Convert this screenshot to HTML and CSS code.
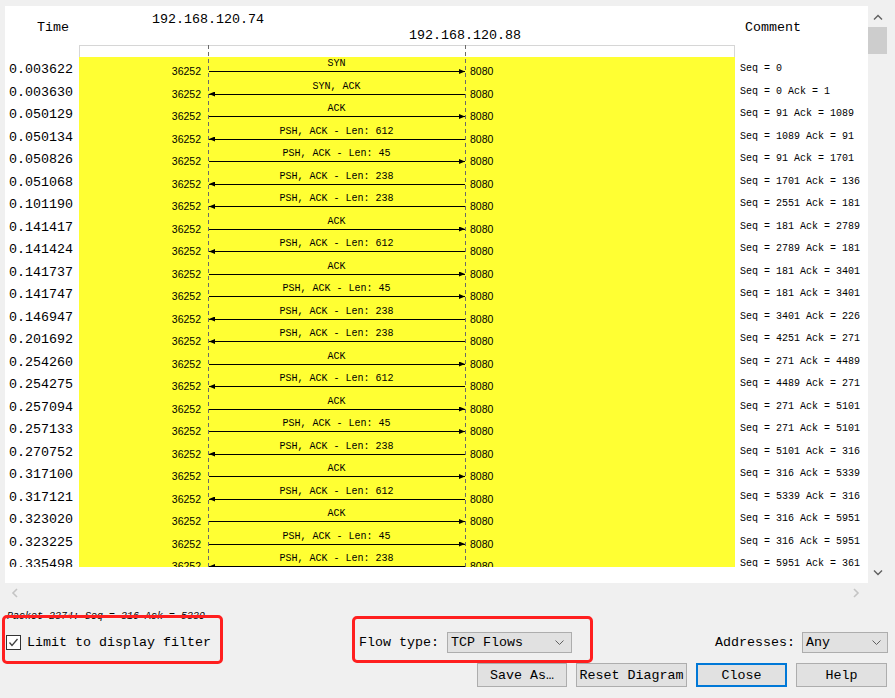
FILE: index.html
```html
<!DOCTYPE html>
<html>
<head>
<meta charset="utf-8">
<link rel="stylesheet" href="styles.css">
</head>
<body>
<div class="view">
  <div class="panel">
    <div class="clip">
      <div class="diagram">
        <div class="dash dash-a"></div>
        <div class="dash dash-b"></div>
        <div class="row head">
          <div class="time">Time</div>
          <div class="graph">
            <div class="ip ip-a">192.168.120.74</div>
            <div class="ip ip-b">192.168.120.88</div>
            <div class="frame"></div>
          </div>
          <div class="comment">Comment</div>
        </div>
        <div class="row"><div class="time">0.003622</div><div class="graph"><div class="pl">36252</div><div class="ar"><div class="lbl">SYN</div><div class="line r"></div></div><div class="pr">8080</div></div><div class="comment">Seq = 0</div></div>
        <div class="row"><div class="time">0.003630</div><div class="graph"><div class="pl">36252</div><div class="ar"><div class="lbl">SYN, ACK</div><div class="line l"></div></div><div class="pr">8080</div></div><div class="comment">Seq = 0 Ack = 1</div></div>
        <div class="row"><div class="time">0.050129</div><div class="graph"><div class="pl">36252</div><div class="ar"><div class="lbl">ACK</div><div class="line r"></div></div><div class="pr">8080</div></div><div class="comment">Seq = 91 Ack = 1089</div></div>
        <div class="row"><div class="time">0.050134</div><div class="graph"><div class="pl">36252</div><div class="ar"><div class="lbl">PSH, ACK - Len: 612</div><div class="line l"></div></div><div class="pr">8080</div></div><div class="comment">Seq = 1089 Ack = 91</div></div>
        <div class="row"><div class="time">0.050826</div><div class="graph"><div class="pl">36252</div><div class="ar"><div class="lbl">PSH, ACK - Len: 45</div><div class="line r"></div></div><div class="pr">8080</div></div><div class="comment">Seq = 91 Ack = 1701</div></div>
        <div class="row"><div class="time">0.051068</div><div class="graph"><div class="pl">36252</div><div class="ar"><div class="lbl">PSH, ACK - Len: 238</div><div class="line l"></div></div><div class="pr">8080</div></div><div class="comment">Seq = 1701 Ack = 136</div></div>
        <div class="row"><div class="time">0.101190</div><div class="graph"><div class="pl">36252</div><div class="ar"><div class="lbl">PSH, ACK - Len: 238</div><div class="line l"></div></div><div class="pr">8080</div></div><div class="comment">Seq = 2551 Ack = 181</div></div>
        <div class="row"><div class="time">0.141417</div><div class="graph"><div class="pl">36252</div><div class="ar"><div class="lbl">ACK</div><div class="line r"></div></div><div class="pr">8080</div></div><div class="comment">Seq = 181 Ack = 2789</div></div>
        <div class="row"><div class="time">0.141424</div><div class="graph"><div class="pl">36252</div><div class="ar"><div class="lbl">PSH, ACK - Len: 612</div><div class="line l"></div></div><div class="pr">8080</div></div><div class="comment">Seq = 2789 Ack = 181</div></div>
        <div class="row"><div class="time">0.141737</div><div class="graph"><div class="pl">36252</div><div class="ar"><div class="lbl">ACK</div><div class="line r"></div></div><div class="pr">8080</div></div><div class="comment">Seq = 181 Ack = 3401</div></div>
        <div class="row"><div class="time">0.141747</div><div class="graph"><div class="pl">36252</div><div class="ar"><div class="lbl">PSH, ACK - Len: 45</div><div class="line r"></div></div><div class="pr">8080</div></div><div class="comment">Seq = 181 Ack = 3401</div></div>
        <div class="row"><div class="time">0.146947</div><div class="graph"><div class="pl">36252</div><div class="ar"><div class="lbl">PSH, ACK - Len: 238</div><div class="line l"></div></div><div class="pr">8080</div></div><div class="comment">Seq = 3401 Ack = 226</div></div>
        <div class="row"><div class="time">0.201692</div><div class="graph"><div class="pl">36252</div><div class="ar"><div class="lbl">PSH, ACK - Len: 238</div><div class="line l"></div></div><div class="pr">8080</div></div><div class="comment">Seq = 4251 Ack = 271</div></div>
        <div class="row"><div class="time">0.254260</div><div class="graph"><div class="pl">36252</div><div class="ar"><div class="lbl">ACK</div><div class="line r"></div></div><div class="pr">8080</div></div><div class="comment">Seq = 271 Ack = 4489</div></div>
        <div class="row"><div class="time">0.254275</div><div class="graph"><div class="pl">36252</div><div class="ar"><div class="lbl">PSH, ACK - Len: 612</div><div class="line l"></div></div><div class="pr">8080</div></div><div class="comment">Seq = 4489 Ack = 271</div></div>
        <div class="row"><div class="time">0.257094</div><div class="graph"><div class="pl">36252</div><div class="ar"><div class="lbl">ACK</div><div class="line r"></div></div><div class="pr">8080</div></div><div class="comment">Seq = 271 Ack = 5101</div></div>
        <div class="row"><div class="time">0.257133</div><div class="graph"><div class="pl">36252</div><div class="ar"><div class="lbl">PSH, ACK - Len: 45</div><div class="line r"></div></div><div class="pr">8080</div></div><div class="comment">Seq = 271 Ack = 5101</div></div>
        <div class="row"><div class="time">0.270752</div><div class="graph"><div class="pl">36252</div><div class="ar"><div class="lbl">PSH, ACK - Len: 238</div><div class="line l"></div></div><div class="pr">8080</div></div><div class="comment">Seq = 5101 Ack = 316</div></div>
        <div class="row"><div class="time">0.317100</div><div class="graph"><div class="pl">36252</div><div class="ar"><div class="lbl">ACK</div><div class="line r"></div></div><div class="pr">8080</div></div><div class="comment">Seq = 316 Ack = 5339</div></div>
        <div class="row"><div class="time">0.317121</div><div class="graph"><div class="pl">36252</div><div class="ar"><div class="lbl">PSH, ACK - Len: 612</div><div class="line l"></div></div><div class="pr">8080</div></div><div class="comment">Seq = 5339 Ack = 316</div></div>
        <div class="row"><div class="time">0.323020</div><div class="graph"><div class="pl">36252</div><div class="ar"><div class="lbl">ACK</div><div class="line r"></div></div><div class="pr">8080</div></div><div class="comment">Seq = 316 Ack = 5951</div></div>
        <div class="row"><div class="time">0.323225</div><div class="graph"><div class="pl">36252</div><div class="ar"><div class="lbl">PSH, ACK - Len: 45</div><div class="line r"></div></div><div class="pr">8080</div></div><div class="comment">Seq = 316 Ack = 5951</div></div>
        <div class="row"><div class="time">0.335498</div><div class="graph"><div class="pl">36252</div><div class="ar"><div class="lbl">PSH, ACK - Len: 238</div><div class="line l"></div></div><div class="pr">8080</div></div><div class="comment">Seq = 5951 Ack = 361</div></div>
      </div>
    </div>
  </div>
  <div class="vscroll">
    <div class="vbtn"><svg width="10" height="6" viewBox="0 0 10 6"><polyline points="1,5.5 5,1.5 9,5.5" fill="none" stroke="#606060" stroke-width="1.4"/></svg></div>
    <div class="thumb"></div>
    <div class="vfill"></div>
    <div class="vbtn"><svg width="10" height="6" viewBox="0 0 10 6"><polyline points="1,0.5 5,4.5 9,0.5" fill="none" stroke="#606060" stroke-width="1.4"/></svg></div>
  </div>
</div>
<div class="hscroll">
  <svg width="7" height="10" viewBox="0 0 7 10"><polyline points="6,1 2,5 6,9" fill="none" stroke="#c4c4c4" stroke-width="1.6"/></svg>
  <svg width="7" height="10" viewBox="0 0 7 10"><polyline points="1,1 5,5 1,9" fill="none" stroke="#c4c4c4" stroke-width="1.6"/></svg>
</div>
<div class="status">Packet 2374: Seq = 316 Ack = 5339</div>
<div class="controls">
  <div class="check">
    <span class="box"><svg width="13" height="13" viewBox="0 0 13 13"><polyline points="2.5,6.5 5,9.5 10.5,3" fill="none" stroke="#404040" stroke-width="1.3"/></svg></span>
    <span class="check-label">Limit to display filter</span>
  </div>
  <div class="group flow">
    <span>Flow type:</span>
    <div class="combo flow-combo"><span>TCP Flows</span><svg width="9" height="5" viewBox="0 0 9 5"><polyline points="0.5,0.5 4.5,4.5 8.5,0.5" fill="none" stroke="#606060" stroke-width="1"/></svg></div>
  </div>
  <div class="group addr">
    <span>Addresses:</span>
    <div class="combo addr-combo"><span>Any</span><svg width="9" height="5" viewBox="0 0 9 5"><polyline points="0.5,0.5 4.5,4.5 8.5,0.5" fill="none" stroke="#606060" stroke-width="1"/></svg></div>
  </div>
</div>
<div class="buttons">
  <div class="btn b-save">Save As…</div>
  <div class="btn b-reset">Reset Diagram</div>
  <div class="btn b-close">Close</div>
  <div class="btn b-help">Help</div>
</div>
<div class="mark m1"></div>
<div class="mark m2"></div>
</body>
</html>
```

FILE: styles.css
```css
* { box-sizing: border-box; }
html, body { margin: 0; padding: 0; }
body {
  position: relative;
  width: 895px;
  height: 698px;
  overflow: hidden;
  background: #f0f0f0;
  font-family: "Liberation Mono", "DejaVu Sans Mono", monospace;
  font-size: 13.33px;
  color: #000;
}
.view { display: flex; padding: 6px 0 0 5px; }
.panel { width: 863px; height: 577px; background: #fff; }
.clip { height: 561px; overflow: hidden; }
.diagram { position: relative; }
.dash {
  position: absolute;
  top: 39px;
  bottom: 0;
  width: 1px;
  background: repeating-linear-gradient(to bottom, #6a6a6a 0 4px, transparent 4px 7px);
}
.dash-a { left: 203px; }
.dash-b { left: 460px; }

.row {
  display: grid;
  grid-template-columns: 74px 656px 133px;
  height: 22.5px;
}
.row.head { height: 51px; }
.time {
  text-align: right;
  padding-right: 6px;
  padding-top: 5px;
  line-height: 16px;
  white-space: nowrap;
}
.head .time { text-align: left; padding-left: 32px; padding-top: 14px; }
.graph {
  background: #ffff33;
  display: grid;
  grid-template-columns: 129px 257px 1fr;
}
.head .graph { background: #fff; display: block; }
.ip { width: 258px; height: 16px; line-height: 16px; text-align: center; white-space: nowrap; }
.ip-a { margin-top: 6px; }
.ip-b { margin-left: 257px; }
.frame { margin-top: 1px; height: 12px; border: 1px solid #d6d6d6; border-bottom: 0; }

.pl, .pr {
  font-family: "Liberation Sans", Arial, sans-serif;
  font-size: 10.5px;
  line-height: 12px;
  padding-top: 8px;
}
.pl { text-align: right; padding-right: 7px; }
.pr { padding-left: 5px; }
.ar { font-size: 10px; }
.lbl { height: 14px; padding-top: 1px; line-height: 12px; text-align: center; white-space: nowrap; }
.line { position: relative; height: 1px; margin-left: 1px; background: #000; }
.line::after {
  content: "";
  position: absolute;
  top: -2px;
  width: 6px;
  height: 5px;
  background: #000;
}
.line.r::after { right: 0; clip-path: polygon(0 0, 100% 50%, 0 100%); }
.line.l::after { left: 0; clip-path: polygon(100% 0, 0 50%, 100% 100%); }

.comment {
  font-size: 10px;
  line-height: 12px;
  padding-top: 6px;
  padding-left: 5px;
  white-space: nowrap;
  overflow: hidden;
}
.head .comment { font-size: 13.33px; line-height: 16px; padding-top: 14px; padding-left: 10px; }

.vscroll { width: 19px; height: 577px; display: flex; flex-direction: column; }
.vbtn { height: 21px; display: flex; align-items: center; justify-content: center; }
.thumb { height: 27px; background: #cdcdcd; }
.vfill { flex: 1; }

.hscroll {
  width: 863px;
  height: 20px;
  margin-left: 5px;
  padding: 0 8px 0 6px;
  display: flex;
  align-items: center;
  justify-content: space-between;
}

.status {
  margin: 8px 0 0 7px;
  height: 12px;
  font-size: 10px;
  line-height: 12px;
  font-style: italic;
  white-space: nowrap;
}

.controls {
  display: flex;
  align-items: center;
  height: 21px;
  margin-top: 9px;
  padding-right: 7px;
}
.check { display: flex; align-items: center; margin-left: 6px; }
.box {
  width: 15px;
  height: 15px;
  border: 1px solid #333;
  background: #fff;
  display: flex;
  align-items: center;
  justify-content: center;
}
.check-label { margin-left: 6px; white-space: nowrap; }
.group { display: flex; align-items: center; white-space: nowrap; }
.flow { margin-left: 148px; }
.addr { margin-left: auto; }
.combo {
  height: 21px;
  margin-left: 8px;
  border: 1px solid #adadad;
  background: #e1e1e1;
  display: flex;
  align-items: center;
  padding-left: 3px;
  padding-right: 7px;
}
.combo svg { margin-left: auto; }
.flow-combo { width: 125px; }
.addr-combo { width: 86px; margin-left: 7px; padding-right: 6px; }

.buttons {
  display: flex;
  justify-content: flex-end;
  gap: 9px;
  margin-top: 10px;
  padding-right: 8px;
}
.btn {
  height: 24px;
  border: 1px solid #adadad;
  background: #e1e1e1;
  display: flex;
  align-items: center;
  justify-content: center;
  white-space: nowrap;
}
.b-save { width: 90px; }
.b-reset { width: 111px; }
.b-close { width: 91px; border: 2px solid #0078d7; }
.b-help { width: 91px; }

.mark {
  position: absolute;
  border: 3px solid #ff1f1f;
  border-radius: 5px;
}
.m1 { left: 2px; top: 615px; width: 221px; height: 49px; }
.m2 { left: 352px; top: 616px; width: 241px; height: 47px; }
```
